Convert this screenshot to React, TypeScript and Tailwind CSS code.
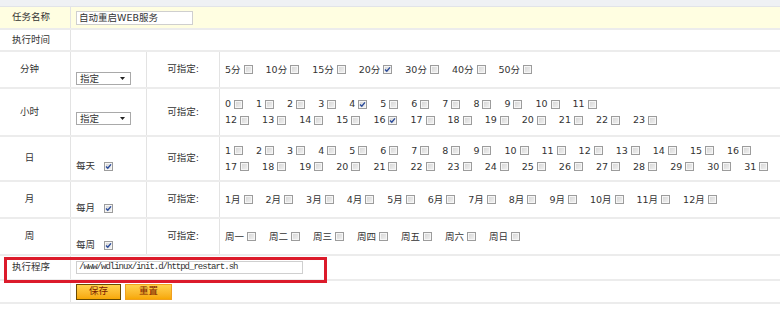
import React from "react";

function Box({ checked }: { checked?: boolean }) {
  return (
    <span className="inline-flex h-[9px] w-[9px] shrink-0 items-center justify-center border border-[#9c9c9c] bg-linear-to-br from-[#d4d4d4] to-[#f3f3f3] shadow-[inset_0_0_0_1px_#f6f6f6]">
      {checked && (
        <svg viewBox="0 0 7 7" className="h-[7px] w-[7px]">
          <path d="M1 3.4 L2.8 5.3 L6 1.4" stroke="#2b4c9b" strokeWidth="1.4" fill="none" />
        </svg>
      )}
    </span>
  );
}

function Opt({ label, checked }: { label: string; checked?: boolean }) {
  return (
    <span className="mr-[13px] inline-flex items-center">
      <span>{label}</span>
      <span className="ml-[3px] inline-flex">
        <Box checked={checked} />
      </span>
    </span>
  );
}

function Select() {
  return (
    <div className="flex h-[13px] w-[55px] items-center justify-between border border-[#a9a9a9] bg-white pl-[3px] pr-[5px] leading-none">
      <span>指定</span>
      <svg viewBox="0 0 5 3" className="h-[3px] w-[5px]">
        <path d="M0 0 H5 L2.5 3 Z" fill="#222" />
      </svg>
    </div>
  );
}

function Every({ label }: { label: string }) {
  return (
    <div className="flex items-center">
      <span>{label}</span>
      <span className="ml-[9px] inline-flex">
        <Box checked />
      </span>
    </div>
  );
}

const line = "border-b-2 border-[#ececec]";
const vline = "border-r border-[#e3e3e3]";

function TimeRow({
  h,
  title,
  pad,
  control,
  lines,
}: {
  h: string;
  title: string;
  pad: string;
  control: React.ReactNode;
  lines: React.ReactNode[];
}) {
  return (
    <div className={`flex ${h} ${line}`}>
      <div className={`flex w-[71px] shrink-0 items-center justify-center pr-[11px] ${vline}`}>{title}</div>
      <div className={`flex w-[76px] shrink-0 items-center pl-[5px] ${pad} ${vline}`}>{control}</div>
      <div className={`flex w-[73px] shrink-0 items-center justify-center ${vline}`}>可指定:</div>
      <div className="flex flex-1 flex-col justify-center pl-[5px] leading-[16px]">
        {lines.map((l, i) => (
          <div key={i} className="flex items-center">
            {l}
          </div>
        ))}
      </div>
    </div>
  );
}

const range = (a: number, b: number) => Array.from({ length: b - a + 1 }, (_, i) => a + i);

export default function App() {
  const minutes = ["5分", "10分", "15分", "20分", "30分", "40分", "50分"];
  const months = range(1, 12).map((m) => `${m}月`);
  const week = ["周一", "周二", "周三", "周四", "周五", "周六", "周日"];

  return (
    <div className="h-[311px] w-[780px] overflow-hidden bg-white font-[family-name:'DejaVu_Sans','Noto_Sans_CJK_SC',sans-serif] text-[9.5px] text-[#333]">
      <div className="h-[7px] border-b border-[#e2e4e8] bg-[#eff1f4]" />

      <div className={`flex h-[23px] bg-[#fffee1] ${line}`}>
        <div className={`flex w-[71px] shrink-0 items-center pl-[12px] ${vline}`}>任务名称</div>
        <div className="flex items-center pl-[5px]">
          <div className="flex h-[14px] w-[117px] items-center border border-[#cfcfcf] bg-white pl-[2px] leading-none">
            自动重启WEB服务
          </div>
        </div>
      </div>

      <div className={`flex h-[22px] ${line}`}>
        <div className={`flex w-[71px] shrink-0 items-center pl-[12px] ${vline}`}>执行时间</div>
        <div className="flex-1" />
      </div>

      <TimeRow
        h="h-[37px]"
        title="分钟"
        pad="pt-[18px]"
        control={<Select />}
        lines={[minutes.map((m) => <Opt key={m} label={m} checked={m === "20分"} />)]}
      />
      <TimeRow
        h="h-[48px]"
        title="小时"
        pad="pt-[13px]"
        control={<Select />}
        lines={[
          range(0, 11).map((n) => <Opt key={n} label={String(n)} checked={n === 4} />),
          range(12, 23).map((n) => <Opt key={n} label={String(n)} checked={n === 16} />),
        ]}
      />
      <TimeRow
        h="h-[45px]"
        title="日"
        pad="pt-[16px]"
        control={<Every label="每天" />}
        lines={[
          range(1, 16).map((n) => <Opt key={n} label={String(n)} />),
          range(17, 31).map((n) => <Opt key={n} label={String(n)} />),
        ]}
      />
      <TimeRow
        h="h-[37px]"
        title="月"
        pad="pt-[17px]"
        control={<Every label="每月" />}
        lines={[months.map((m) => <Opt key={m} label={m} />)]}
      />
      <TimeRow
        h="h-[37px]"
        title="周"
        pad="pt-[17px]"
        control={<Every label="每周" />}
        lines={[week.map((w) => <Opt key={w} label={w} />)]}
      />

      <div className={`relative flex h-[25px] ${line}`}>
        <div className={`flex w-[71px] shrink-0 items-center pl-[12px] ${vline}`}>执行程序</div>
        <div className="flex items-center pl-[5px]">
          <div className="flex h-[13px] w-[227px] items-center border border-[#cfcfcf] bg-white pl-[2px] font-[family-name:'Liberation_Mono',monospace] text-[9px] leading-none tracking-[-1px]">
            /www/wdlinux/init.d/httpd_restart.sh
          </div>
        </div>
        <div className="absolute left-[4px] top-[1px] h-[26px] w-[323px] border-[3px] border-[#dc1b2b]" />
      </div>

      <div className={`flex h-[23px] ${line}`}>
        <div className={`w-[71px] shrink-0 ${vline}`} />
        <div className="flex items-center gap-[4px] pl-[5px]">
          <button className="flex h-[16px] w-[45px] items-center justify-center border border-[#6b4a00] bg-linear-to-b from-[#ffd24a] to-[#f7a800] text-[#7a2200]">
            保存
          </button>
          <button className="flex h-[16px] w-[47px] items-center justify-center border border-[#f0a020] bg-linear-to-b from-[#ffd24a] to-[#f7a800] text-[#7a2200]">
            重置
          </button>
        </div>
      </div>
    </div>
  );
}
